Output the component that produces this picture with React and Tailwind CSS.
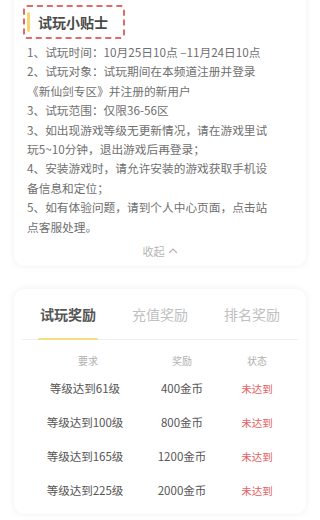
import React, { useState } from "react";

const tips = [
  ["1、试玩时间：10月25日10点 –11月24日10点"],
  ["2、试玩对象：试玩期间在本频道注册并登录", "《新仙剑专区》并注册的新用户"],
  ["3、试玩范围：仅限36-56区"],
  ["3、如出现游戏等级无更新情况，请在游戏里试", "玩5~10分钟，退出游戏后再登录；"],
  ["4、安装游戏时，请允许安装的游戏获取手机设", "备信息和定位；"],
  ["5、如有体验问题，请到个人中心页面，点击站", "点客服处理。"],
];

const rewards = [
  { need: "等级达到61级", prize: "400金币" },
  { need: "等级达到100级", prize: "800金币" },
  { need: "等级达到165级", prize: "1200金币" },
  { need: "等级达到225级", prize: "2000金币" },
];

const tabs = ["试玩奖励", "充值奖励", "排名奖励"];

const App = () => {
  const [tab, setTab] = useState(0);

  return (
    <div
      className="min-h-screen w-full overflow-hidden bg-white px-[14px]"
      style={{ fontFamily: '"Noto Sans CJK SC", "Noto Sans", sans-serif' }}
    >
      {/* tips card */}
      <div className="-mt-[8px] rounded-[10px] bg-white pl-[9px] pr-[13px] pt-[13px] pb-[6px] shadow-[0_0_6px_rgba(0,0,0,0.07)]">
        <div className="flex h-[34px] w-[102px] items-center rounded-[4px] border-2 border-dashed border-[#e06a6a] pl-[2px]">
          <span className="h-[20px] w-[3px] rounded-full bg-[#f5d76e]" />
          <span className="ml-[8px] text-[14px] font-bold text-[#4a4a4a]">试玩小贴士</span>
        </div>
        <div className="mt-[3px] pl-[4px] text-[11.7px] leading-[19.4px] text-[#707070]">
          {tips.map((lines, i) => (
            <p key={i} className="whitespace-nowrap">
              {lines.map((l, j) => (
                <React.Fragment key={j}>
                  {j > 0 && <br />}
                  {l}
                </React.Fragment>
              ))}
            </p>
          ))}
        </div>
        <div className="mt-[6px] flex items-center justify-center gap-[3px] pl-[4px] text-[11px] leading-[18px] text-[#b5b5b5]">
          <span>收起</span>
          <svg width="10" height="10" viewBox="0 0 10 10" fill="none">
            <path d="M1.5 6.5 L5 3 L8.5 6.5" stroke="#b5b5b5" strokeWidth="1.2" strokeLinecap="round" />
          </svg>
        </div>
      </div>

      {/* rewards card */}
      <div className="mt-[23px] rounded-[10px] bg-white pb-[6px] shadow-[0_0_6px_rgba(0,0,0,0.07)]">
        <div className="mx-[8px] grid grid-cols-3 border-b border-[#eeeeee]">
          {tabs.map((t, i) => (
            <button
              key={t}
              onClick={() => setTab(i)}
              className={`relative flex h-[50px] items-center justify-center text-[14px] ${
                tab === i ? "font-bold text-[#555]" : "text-[#c0c0c0]"
              }`}
            >
              {t}
              {tab === i && (
                <span className="absolute bottom-[-1px] left-1/2 h-[2px] w-[60px] -translate-x-1/2 rounded-full bg-[#f6df82]" />
              )}
            </button>
          ))}
        </div>
        <div className="mt-[8px] grid grid-cols-[142px_52px_1fr]">
          <div className="flex h-[24px] items-center justify-center pl-[6px] text-[10px] text-[#b0b0b0]">要求</div>
          <div className="flex h-[24px] items-center justify-center text-[10px] text-[#b0b0b0]">奖励</div>
          <div className="flex h-[24px] items-center justify-center text-[10px] text-[#b0b0b0]">状态</div>
          {rewards.map((r) => (
            <React.Fragment key={r.need}>
              <div className="flex h-[34px] items-center justify-center text-[11.5px] text-[#555]">{r.need}</div>
              <div className="flex h-[34px] items-center justify-center whitespace-nowrap text-[11.5px] text-[#555]">{r.prize}</div>
              <div className="flex h-[34px] items-center justify-center text-[10.5px] text-[#e56060]">未达到</div>
            </React.Fragment>
          ))}
        </div>
      </div>

      <div className="mt-[6px] h-[20px] rounded-t-[4px] border-t-2 border-dashed border-[#f6b8a6]" />
    </div>
  );
};

export default App;
